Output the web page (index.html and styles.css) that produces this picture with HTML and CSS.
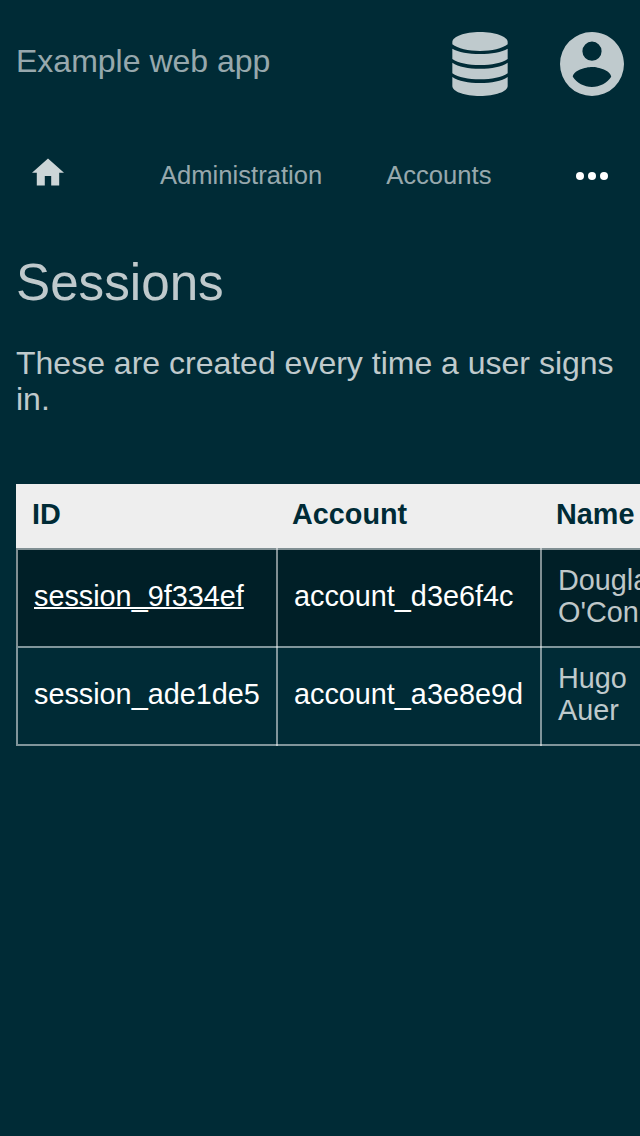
FILE: index.html
```html
<!DOCTYPE html>
<html lang="en">
<head>
<meta charset="utf-8">
<title>Sessions</title>
<link rel="stylesheet" href="styles.css">
</head>
<body>
<header class="header">
  <div class="brand">Example web app</div>
  <div class="actions">
    <svg class="database" viewBox="36 36 168 192"><path d="M37 66C37 50 74 36 120 36S203 50 203 66V73C187 86 155 93 120 93S53 86 37 73Z"/><path d="M37 86C55 96 85 102 120 102S185 96 203 86V117C185 129 155 135 120 135S55 129 37 117Z"/><path d="M37 128C55 140 85 146 120 146S185 140 203 128V160C185 172 155 178 120 178S55 172 37 160Z"/><path d="M37 171C55 183 85 189 120 189S185 183 203 171V198C203 215 165 228 120 228S37 215 37 198Z"/></svg>
    <svg class="account" viewBox="2 2 20 20"><path d="M12,19.2C9.5,19.2 7.29,17.92 6,16C6.03,14 10,12.9 12,12.9C14,12.9 17.97,14 18,16C16.71,17.92 14.5,19.2 12,19.2M12,5A3,3 0 0,1 15,8A3,3 0 0,1 12,11A3,3 0 0,1 9,8A3,3 0 0,1 12,5M12,2A10,10 0 0,0 2,12A10,10 0 0,0 12,22A10,10 0 0,0 22,12C22,6.47 17.5,2 12,2Z"/></svg>
  </div>
</header>
<nav class="nav">
  <svg class="home" viewBox="2 3 20 17"><path d="M10,20V14H14V20H19V12H22L12,3L2,12H5V20H10Z"/></svg>
  <span class="nav-admin">Administration</span>
  <span class="nav-accounts">Accounts</span>
  <svg class="more" viewBox="0 0 32 8"><circle cx="4" cy="4" r="4"/><circle cx="16" cy="4" r="4"/><circle cx="28" cy="4" r="4"/></svg>
</nav>
<main class="main">
  <h1 class="title">Sessions</h1>
  <p class="intro">These are created every time a user signs in.</p>
  <div class="scroller">
  <table class="table">
    <thead>
      <tr><th class="col-id">ID</th><th class="col-account">Account</th><th class="col-name">Name</th></tr>
    </thead>
    <tbody>
      <tr class="row active"><td><a class="link current">session_9f334ef</a></td><td><a class="link">account_d3e6f4c</a></td><td>Douglas O'Conner</td></tr>
      <tr class="row"><td><a class="link">session_ade1de5</a></td><td><a class="link">account_a3e8e9d</a></td><td>Hugo<br>Auer</td></tr>
    </tbody>
  </table>
  </div>
</main>
</body>
</html>
```
FILE: styles.css
```css
* { box-sizing: border-box; }
html { background: #002b36; }
body {
  margin: 0;
  height: 1136px;
  overflow: hidden;
  background: #002b36;
  color: rgba(255, 255, 255, 0.75);
  font-family: "Liberation Sans", Arial, sans-serif;
}
svg { display: block; flex: none; }
.header {
  display: flex;
  justify-content: space-between;
  height: 128px;
  padding: 32px 16px;
}
.brand {
  padding-top: 11px;
  font-size: 32px;
  line-height: 36px;
  color: rgba(255, 255, 255, 0.6);
}
.actions { display: flex; gap: 52px; fill: #bfcacd; }
.database { width: 56px; height: 64px; }
.account { width: 64px; height: 64px; }
.nav {
  display: flex;
  align-items: flex-start;
  height: 96px;
  padding: 30px 32px 0;
  font-size: 25.6px;
  line-height: 34px;
  color: rgba(255, 255, 255, 0.6);
}
.home { width: 32px; height: 28px; fill: #ccd5d7; }
.nav-admin { margin-left: 96px; }
.nav-accounts { margin-left: 64px; }
.more { width: 32px; height: 8px; margin: 14px 0 0 auto; fill: #fff; }
.main { padding: 29px 0 0 16px; }
.title { margin: 0; font-size: 51.2px; line-height: 59px; font-weight: 400; }
.intro { margin: 33px 16px 67px 0; font-size: 32px; line-height: 36px; }
.scroller { overflow: hidden; }
.table {
  width: 700px;
  table-layout: fixed;
  border-spacing: 0;
  font-size: 28.8px;
  line-height: 32px;
}
.table th {
  padding: 14px 0 18px 16px;
  background: #eee;
  color: #002b36;
  text-align: left;
}
.col-id { width: 260px; }
.col-account { width: 264px; }
.col-name { width: 176px; }
.row td {
  --line: linear-gradient(rgba(255, 255, 255, 0.5), rgba(255, 255, 255, 0.5));
  padding: 16px 16px 18px 18px;
  background: var(--line) 0 0 / 2px 100% no-repeat, var(--line) 0 0 / 100% 2px no-repeat;
}
.row td:first-child {
  background: var(--line) 0 0 / 2px 100% no-repeat, var(--line) 2px 0 / 100% 2px no-repeat;
}
.active { background: #001f27; }
.row:last-child td {
  padding-bottom: 20px;
  background: var(--line) 0 0 / 2px 100% no-repeat, var(--line) 0 0 / 100% 2px no-repeat, var(--line) 0 100% / 100% 2px no-repeat;
}
.row:last-child td:first-child {
  background: var(--line) 0 0 / 2px 100% no-repeat, var(--line) 2px 0 / 100% 2px no-repeat, var(--line) 2px 100% / 100% 2px no-repeat;
}
.link { color: #fff; }
.current {
  text-decoration: underline;
  text-decoration-thickness: 2px;
  text-decoration-skip-ink: none;
}
```
